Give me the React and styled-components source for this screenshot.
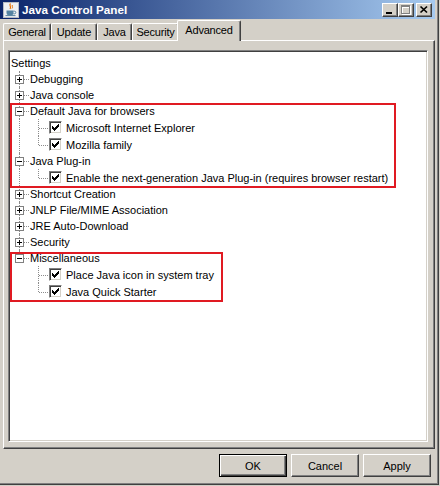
import React from "react";
import styled, { createGlobalStyle, css } from "styled-components";

const GlobalStyle = createGlobalStyle`
  html, body {
    margin: 0;
    padding: 0;
    background: #d4d0c8;
  }
  body {
    font-family: "Liberation Sans", Arial, sans-serif;
    font-size: 11px;
    color: #000;
  }
`;

const Window = styled.div`
  box-sizing: border-box;
  width: 439px;
  height: 485px;
  padding-right: 3px;
  border-right: 1px solid #404040;
  border-bottom: 1px solid #404040;
  box-shadow: inset -1px -1px 0 #808080;
  display: flex;
  flex-direction: column;
`;

const TitleBar = styled.div`
  height: 19px;
  display: flex;
  align-items: center;
  padding-left: 3px;
  background: linear-gradient(to right, #0a246a, #a6caf0);
  color: #fff;
  font-weight: bold;
  font-size: 11.7px;
`;

const Title = styled.span`
  margin-left: 3px;
`;

const Captions = styled.div`
  margin-left: auto;
  display: flex;
  align-self: flex-start;
  margin-top: 3px;
  padding-right: 3px;
`;

const CaptionButton = styled.span`
  box-sizing: border-box;
  width: 16px;
  height: 14px;
  display: flex;
  background: #d4d0c8;
  border: 1px solid;
  border-color: #fff #404040 #404040 #fff;
  box-shadow: inset -1px -1px 0 #808080;
  margin-left: ${({ $gap }) => $gap || 0}px;
`;

const TabStrip = styled.div`
  margin-top: 1px;
  height: 20px;
  display: flex;
  align-items: flex-end;
  padding-left: 3px;
  position: relative;
  z-index: 1;
`;

const Tab = styled.div`
  box-sizing: border-box;
  width: ${({ $w }) => $w}px;
  height: 17px;
  display: flex;
  align-items: center;
  justify-content: center;
  letter-spacing: -0.2px;
  background: #d4d0c8;
  border-top: 1px solid #fff;
  border-left: 1px solid #fff;
  border-right: 1px solid #404040;
  box-shadow: inset -1px 0 0 #808080;
  border-top-left-radius: 2px;
  border-top-right-radius: 2px;
  padding-bottom: 1px;
  ${({ $active }) =>
    $active &&
    css`
      height: 21px;
      margin: 0 -2px -1px;
      padding-bottom: 2px;
      width: ${({ $w }) => $w + 4}px;
    `}
`;

const Panel = styled.div`
  box-sizing: border-box;
  margin-left: 3px;
  width: 432px;
  height: 409px;
  padding: 9px 0 0 4px;
  border-top: 1px solid #fff;
  border-left: 1px solid #fff;
  border-right: 1px solid #404040;
  border-bottom: 1px solid #404040;
  box-shadow: inset -1px -1px 0 #808080;
`;

const TreeBox = styled.div`
  box-sizing: border-box;
  position: relative;
  width: 420px;
  height: 392px;
  padding: 4px 0 0 1px;
  background: #fff;
  border: 1px solid;
  border-color: #808080 #fff #fff #808080;
  box-shadow: inset 1px 1px 0 #404040, inset -1px -1px 0 #d4d0c8;
`;

const Row = styled.div`
  display: flex;
  align-items: center;
  height: ${({ $h }) => $h}px;
  white-space: nowrap;
`;

const lineColor = "#8c8c8c";

const Cell = styled.span`
  position: relative;
  flex: 0 0 19px;
  align-self: stretch;
  ${({ $kind }) =>
    ($kind === "pipe" || $kind === "tee") &&
    css`
      &::before {
        content: "";
        position: absolute;
        left: 9px;
        top: 0;
        bottom: 0;
        border-left: 1px dotted ${lineColor};
      }
    `}
  ${({ $kind }) =>
    $kind === "ell" &&
    css`
      &::before {
        content: "";
        position: absolute;
        left: 9px;
        top: 0;
        height: 50%;
        border-left: 1px dotted ${lineColor};
      }
    `}
  ${({ $kind }) =>
    ($kind === "tee" || $kind === "ell") &&
    css`
      &::after {
        content: "";
        position: absolute;
        left: 10px;
        right: 0;
        top: 50%;
        border-top: 1px dotted ${lineColor};
      }
    `}
`;

const Toggle = styled.svg`
  position: absolute;
  left: 5px;
  top: calc(50% - 4px);
  z-index: 1;
`;

const Check = styled.span`
  box-sizing: border-box;
  flex: 0 0 13px;
  width: 13px;
  height: 13px;
  margin-left: 1px;
  display: flex;
  align-items: center;
  justify-content: center;
  background: #fff;
  border: 1px solid;
  border-color: #808080 #fff #fff #808080;
  box-shadow: inset 1px 1px 0 #404040, inset -1px -1px 0 #d4d0c8;
`;

const Label = styled.span`
  margin-left: ${({ $check }) => ($check ? 4 : 1)}px;
`;

const Mark = styled.div`
  position: absolute;
  left: ${({ $x }) => $x}px;
  top: ${({ $y }) => $y}px;
  width: ${({ $w }) => $w}px;
  height: ${({ $h }) => $h}px;
  box-sizing: border-box;
  border: 2px solid #e01a22;
  pointer-events: none;
`;

const ButtonRow = styled.div`
  display: flex;
  justify-content: flex-end;
  gap: 4px;
  margin-top: 5px;
  padding-right: 4px;
`;

const Button = styled.button`
  box-sizing: border-box;
  width: 68px;
  height: 23px;
  padding: 0;
  font: 11px "Liberation Sans", Arial, sans-serif;
  color: #000;
  background: #d4d0c8;
  border: 1px solid;
  border-color: #fff #404040 #404040 #fff;
  box-shadow: inset -1px -1px 0 #808080;
  ${({ $default }) =>
    $default &&
    css`
      border-color: #000;
      box-shadow: inset 1px 1px 0 #fff, inset -1px -1px 0 #404040,
        inset -2px -2px 0 #808080;
    `}
`;

function JavaIcon() {
  return (
    <svg width="16" height="16" viewBox="0 0 16 16">
      <rect x="0.5" y="0.5" width="15" height="15" fill="#eef0f2" stroke="#b8bcc4" />
      <path d="M7.5 1.5c-2 2 1.5 3 -0.5 5.5" fill="none" stroke="#e76f00" strokeWidth="1.2" />
      <path d="M9.5 3c-1.2 1.3 1 2 -0.5 3.5" fill="none" stroke="#e76f00" strokeWidth="1" />
      <path d="M3.5 8.5h7v2a3 3 0 0 1 -3 3h-1a3 3 0 0 1 -3 -3z" fill="#5382a1" />
      <path d="M10.5 9.2h1a1.3 1.3 0 0 1 0 2.6h-1.2" fill="none" stroke="#5382a1" strokeWidth="1" />
      <path d="M2.5 13.6h10" stroke="#5382a1" strokeWidth="1" />
    </svg>
  );
}

function MinGlyph() {
  return (
    <svg width="14" height="12" viewBox="0 0 14 12" shapeRendering="crispEdges">
      <rect x="3" y="8" width="6" height="2" fill="#000" />
    </svg>
  );
}

function MaxGlyph() {
  return (
    <svg width="14" height="12" viewBox="0 0 14 12" shapeRendering="crispEdges">
      <path d="M3 2h9v9h-9z M4 4v6h7v-6z" fill="#fff" fillRule="evenodd" />
      <path d="M2 1h9v9h-9z M3 3v6h7v-6z" fill="#808080" fillRule="evenodd" />
    </svg>
  );
}

function CloseGlyph() {
  return (
    <svg width="14" height="12" viewBox="0 0 14 12">
      <path d="M3.5 2.5l6.5 6 M10 2.5l-6.5 6" stroke="#000" strokeWidth="1.7" />
    </svg>
  );
}

function ToggleBox({ open }) {
  return (
    <Toggle width="9" height="9" viewBox="0 0 9 9" shapeRendering="crispEdges">
      <rect x="0.5" y="0.5" width="8" height="8" fill="#fff" stroke="#808080" />
      <rect x="2" y="4" width="5" height="1" fill="#000" />
      {!open && <rect x="4" y="2" width="1" height="5" fill="#000" />}
    </Toggle>
  );
}

function CheckBox() {
  return (
    <Check>
      <svg width="9" height="9" viewBox="0 0 9 9" shapeRendering="crispEdges">
        <path
          d="M1 3H2V4H3V5H4V4H5V3H6V2H7V1H8V4H7V5H6V6H5V7H4V8H3V7H2V6H1Z"
          fill="#000"
        />
      </svg>
    </Check>
  );
}

const tree = [
  { label: "Settings", cells: [] },
  { label: "Debugging", cells: ["tee"], toggle: "plus" },
  { label: "Java console", cells: ["tee"], toggle: "plus" },
  { label: "Default Java for browsers", cells: ["tee"], toggle: "minus" },
  { label: "Microsoft Internet Explorer", cells: ["pipe", "tee"], check: true },
  { label: "Mozilla family", cells: ["pipe", "ell"], check: true },
  { label: "Java Plug-in", cells: ["tee"], toggle: "minus" },
  {
    label: "Enable the next-generation Java Plug-in (requires browser restart)",
    cells: ["pipe", "ell"],
    check: true,
  },
  { label: "Shortcut Creation", cells: ["tee"], toggle: "plus" },
  { label: "JNLP File/MIME Association", cells: ["tee"], toggle: "plus" },
  { label: "JRE Auto-Download", cells: ["tee"], toggle: "plus" },
  { label: "Security", cells: ["tee"], toggle: "plus" },
  { label: "Miscellaneous", cells: ["ell"], toggle: "minus" },
  { label: "Place Java icon in system tray", cells: ["none", "tee"], check: true },
  { label: "Java Quick Starter", cells: ["none", "ell"], check: true },
];

const tabs = [
  { name: "General", w: 48 },
  { name: "Update", w: 46 },
  { name: "Java", w: 35 },
  { name: "Security", w: 47 },
  { name: "Advanced", w: 60, active: true },
];

export default function App() {
  return (
    <>
      <GlobalStyle />
      <Window>
        <TitleBar>
          <JavaIcon />
          <Title>Java Control Panel</Title>
          <Captions>
            <CaptionButton>
              <MinGlyph />
            </CaptionButton>
            <CaptionButton>
              <MaxGlyph />
            </CaptionButton>
            <CaptionButton $gap={2}>
              <CloseGlyph />
            </CaptionButton>
          </Captions>
        </TitleBar>

        <TabStrip>
          {tabs.map((t) => (
            <Tab key={t.name} $w={t.w} $active={t.active}>
              {t.name}
            </Tab>
          ))}
        </TabStrip>

        <Panel>
          <TreeBox>
            {tree.map((node) => (
              <Row key={node.label} $h={node.check ? 17 : 16}>
                {node.cells.map((kind, i) => (
                  <Cell key={i} $kind={kind}>
                    {node.toggle && i === node.cells.length - 1 && (
                      <ToggleBox open={node.toggle === "minus"} />
                    )}
                  </Cell>
                ))}
                {node.check && <CheckBox />}
                <Label $check={node.check}>{node.label}</Label>
              </Row>
            ))}
            <Mark $x={1} $y={52} $w={386} $h={85} />
            <Mark $x={1} $y={201} $w={213} $h={50} />
          </TreeBox>
        </Panel>

        <ButtonRow>
          <Button $default>OK</Button>
          <Button>Cancel</Button>
          <Button>Apply</Button>
        </ButtonRow>
      </Window>
    </>
  );
}
